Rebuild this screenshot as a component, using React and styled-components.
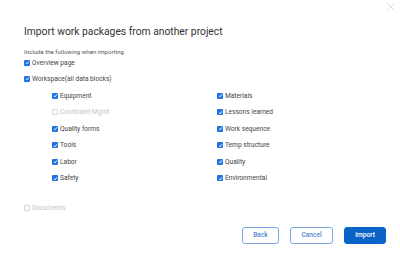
import React from "react";
import styled, { createGlobalStyle } from "styled-components";

const Global = createGlobalStyle`
  html, body { margin: 0; padding: 0; background: #fff; }
  body { font-family: Roboto, "Liberation Sans", sans-serif; }
`;

const Dialog = styled.div`
  width: 400px;
  height: 261px;
  box-sizing: border-box;
  padding: 0 14px 0 24px;
  display: flex;
  flex-direction: column;
  position: relative;
  background: #fff;
`;

const Close = styled.button`
  position: absolute;
  top: 2px;
  right: 4px;
  width: 10px;
  height: 10px;
  padding: 0;
  border: 0;
  background: none;
  display: flex;
`;

const Title = styled.h1`
  margin: 24px 0 0;
  font-size: 10.3px;
  line-height: 16px;
  font-weight: 400;
  color: #333;
`;

const Sub = styled.div`
  margin-top: 7px;
  font-size: 6.1px;
  line-height: 9px;
  color: #555;
`;

const Row = styled.label`
  display: flex;
  align-items: center;
  gap: 2px;
  height: 9px;
  font-size: 6.6px;
  color: ${(p) => (p.$disabled ? "#c4c4c4" : "#444")};
  margin-top: ${(p) => p.$mt || 0}px;
`;

const Box = styled.span`
  width: 6px;
  height: 6px;
  border-radius: 1px;
  box-sizing: border-box;
  flex: none;
  display: flex;
  align-items: center;
  justify-content: center;
  background: ${(p) => (p.$checked ? "#1f74e0" : "#fff")};
  border: ${(p) => (p.$checked ? "none" : "0.7px solid #d4d4d4")};
`;

const Grid = styled.div`
  display: grid;
  grid-template-columns: 165px 1fr;
  row-gap: 7.6px;
  margin: 8px 0 0 28px;
`;

const Footer = styled.div`
  display: flex;
  justify-content: flex-end;
  gap: 11px;
  margin-top: 14px;
`;

const Btn = styled.button`
  height: 17px;
  width: ${(p) => p.$w}px;
  box-sizing: border-box;
  border-radius: 3px;
  font-family: Roboto, "Liberation Sans", sans-serif;
  font-size: 6.6px;
  font-weight: 500;
  padding: 0;
  cursor: pointer;
  border: 1px solid ${(p) => (p.$primary ? "#0a64c8" : "#7aa8e6")};
  background: ${(p) => (p.$primary ? "#0a64c8" : "#fff")};
  color: ${(p) => (p.$primary ? "#fff" : "#4f83d1")};
`;

const Check = ({ checked }) => (
  <Box $checked={checked}>
    {checked && (
      <svg width="5" height="5" viewBox="0 0 10 10">
        <path d="M2 5.5 L4.2 7.6 L8 2.6" fill="none" stroke="#fff" strokeWidth="1.8" />
      </svg>
    )}
  </Box>
);

const Item = ({ label, checked = true, disabled, mt }) => (
  <Row $disabled={disabled} $mt={mt}>
    <Check checked={checked} />
    {label}
  </Row>
);

const items = [
  ["Equipment", true],
  ["Materials", true],
  ["Constraint Mgmt", false],
  ["Lessons learned", true],
  ["Quality forms", true],
  ["Work sequence", true],
  ["Tools", true],
  ["Temp structure", true],
  ["Labor", true],
  ["Quality", true],
  ["Safety", true],
  ["Environmental", true],
];

export default function App() {
  return (
    <>
      <Global />
      <Dialog>
        <Close aria-label="Close">
          <svg width="10" height="10" viewBox="0 0 10 10">
            <path d="M1 1 L9 9 M9 1 L1 9" stroke="#d8d8d8" strokeWidth="0.9" />
          </svg>
        </Close>
        <Title>Import work packages from another project</Title>
        <Sub>Include the following when importing</Sub>
        <Item label="Overview page" mt={2} />
        <Item label="Workspace(all data blocks)" mt={7} />
        <Grid>
          {items.map(([l, c]) => (
            <Item key={l} label={l} checked={c} disabled={!c} />
          ))}
        </Grid>
        <Item label="Documents" checked={false} disabled mt={21} />
        <Footer>
          <Btn $w={37}>Back</Btn>
          <Btn $w={43}>Cancel</Btn>
          <Btn $w={42} $primary>Import</Btn>
        </Footer>
      </Dialog>
    </>
  );
}
